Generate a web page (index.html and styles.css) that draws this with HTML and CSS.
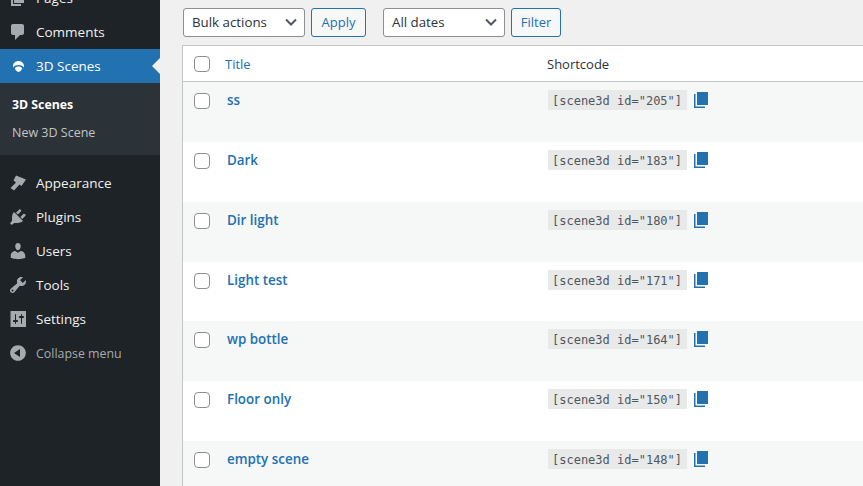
FILE: index.html
```html
<!DOCTYPE html>
<html lang="en">
<head>
    <meta charset="UTF-8">
    <meta name="viewport" content="width=device-width, initial-scale=1.0">
    <title>3D Scenes</title>
    <link rel="stylesheet" href="styles.css">
</head>
<body>
<div class="admin">
    <nav class="sidebar">
        <ul class="menu">
            <li class="menu-item">
                <svg class="menu-icon" viewBox="0 0 20 20"><path d="M6 15V2h10v13H6zm-1 1h8v2H3V5h2v11z"/></svg>
                <span>Pages</span>
            </li>
            <li class="menu-item">
                <svg class="menu-icon" viewBox="0 0 20 20"><path d="M5 2h9c1.100 0 2 .9 2 2v7c0 1.100-.9 2-2 2h-2l-5 5v-5H5c-1.100 0-2-.9-2-2V4c0-1.100.9-2 2-2z"/></svg>
                <span>Comments</span>
            </li>
            <li class="menu-item current">
                <svg class="menu-icon" viewBox="0 0 20 20"><path d="M10.500 5c3 0 5.500 2.200 5.500 5 0 .5-.1 1-.2 1.400C14.500 9.800 12.600 9 10.500 9s-4 .8-5.300 2.400C5.100 11 5 10.500 5 10c0-2.800 2.500-5 5.500-5zm0 5.500c1.500 0 2.800.6 3.800 1.600-.7 2.300-2.100 3.900-3.800 3.900s-3.100-1.600-3.800-3.900c1-1 2.300-1.600 3.800-1.600z"/></svg>
                <span>3D Scenes</span>
            </li>
            <li class="submenu">
                <a class="sub-link active">3D Scenes</a>
                <a class="sub-link">New 3D Scene</a>
            </li>
            <li class="menu-item">
                <svg class="menu-icon" viewBox="0 0 20 20"><path d="M8 2.500l10 4-4.500 6.500-2-1.500-5.500 6-3.500-2.500 5.500-5.500-2.500-2z"/></svg>
                <span>Appearance</span>
            </li>
            <li class="menu-item">
                <svg class="menu-icon" viewBox="0 0 20 20"><path d="M13.110 4.360L9.870 7.600 8 5.730l3.240-3.240c.35-.34 1.050-.2 1.560.32.520.51.660 1.210.310 1.550zm-8 1.770l.91-1.120 9.010 9.010-1.190.84c-.710.710-2.630 1.160-3.820 1.160H6.140L4.900 17.260c-.590.590-1.540.590-2.120 0-.590-.580-.590-1.530 0-2.120l1.240-1.240v-3.880c0-1.130.4-3.050 1.090-3.890zm7.260 3.970l3.240-3.240c.34-.35 1.040-.21 1.550.31.520.51.660 1.210.31 1.550l-3.240 3.250z"/></svg>
                <span>Plugins</span>
            </li>
            <li class="menu-item">
                <svg class="menu-icon" viewBox="0 0 20 20"><path d="M10 9.250c-2.270 0-2.730-3.440-2.730-3.440C7 4.020 7.820 2 9.970 2c2.160 0 2.980 2.020 2.710 3.810 0 0-.41 3.440-2.680 3.440zm0 2.570L12.720 10c2.390 0 4.520 2.330 4.520 4.530v2.490s-3.650 1.130-7.240 1.130c-3.650 0-7.240-1.130-7.240-1.130v-2.490c0-2.250 1.940-4.480 4.470-4.480z"/></svg>
                <span>Users</span>
            </li>
            <li class="menu-item">
                <svg class="menu-icon" viewBox="0 0 20 20"><path d="M16.680 9.770c-1.340 1.340-3.300 1.670-4.950.99l-5.410 6.520c-.99.990-2.590.990-3.580 0s-.990-2.590 0-3.570l6.520-5.420c-.68-1.650-.35-3.610.99-4.950 1.280-1.280 3.120-1.620 4.720-1.060l-2.890 2.890 2.820 2.820 2.860-2.870c.53 1.580.18 3.420-1.080 4.670zM3.810 16.210c.4.390 1.040.39 1.430 0 .4-.4.400-1.040 0-1.430-.39-.4-1.030-.4-1.430 0-.39.390-.39 1.030 0 1.430z"/></svg>
                <span>Tools</span>
            </li>
            <li class="menu-item">
                <svg class="menu-icon" viewBox="0 0 20 20"><path fill-rule="evenodd" d="M18 18V2H2.500v16H18zM8 11h1c.55 0 1 .45 1 1s-.45 1-1 1H8v1.500c0 .280-.22.500-.5.500s-.5-.22-.5-.5V13H6c-.55 0-1-.45-1-1s.45-1 1-1h1V5.500c0-.280.22-.5.5-.5s.5.220.5.500V11zm5-2h-1c-.55 0-1-.45-1-1s.45-1 1-1h1V5.500c0-.280.22-.5.5-.5s.5.220.5.500V7h1c.55 0 1 .45 1 1s-.45 1-1 1h-1v5.500c0 .280-.22.500-.5.500s-.5-.22-.5-.5V9z"/></svg>
                <span>Settings</span>
            </li>
            <li class="menu-item collapse">
                <svg class="menu-icon" viewBox="0 0 20 20"><path fill-rule="evenodd" d="M10 2.160c4.330 0 7.840 3.510 7.840 7.840S14.330 17.840 10 17.840 2.160 14.330 2.160 10 5.670 2.160 10 2.160zM12 14V6l-6 4z"/></svg>
                <span>Collapse menu</span>
            </li>
        </ul>
    </nav>

    <main class="content">
        <div class="toolbar">
            <div class="select">Bulk actions<svg class="caret" viewBox="0 0 16 16"><path d="M3 5.500l5 5 5-5"/></svg></div>
            <button class="btn btn-apply">Apply</button>
            <div class="select dates">All dates<svg class="caret" viewBox="0 0 16 16"><path d="M3 5.500l5 5 5-5"/></svg></div>
            <button class="btn btn-filter">Filter</button>
        </div>

        <div class="table">
            <div class="row head">
                <span class="check"></span>
                <a class="col-title">Title</a>
                <span class="col-code">Shortcode</span>
            </div>
            <div class="row odd">
                <span class="check"></span>
                <a class="title">ss</a>
                <div class="code-cell"><code>[scene3d id="205"]</code><svg class="copy" viewBox="0 0 14 16"><path d="M0 2h1.500v12.500H11V16H0z"/><path d="M3 0h11v13H3z"/></svg></div>
            </div>
            <div class="row">
                <span class="check"></span>
                <a class="title">Dark</a>
                <div class="code-cell"><code>[scene3d id="183"]</code><svg class="copy" viewBox="0 0 14 16"><path d="M0 2h1.500v12.500H11V16H0z"/><path d="M3 0h11v13H3z"/></svg></div>
            </div>
            <div class="row odd">
                <span class="check"></span>
                <a class="title">Dir light</a>
                <div class="code-cell"><code>[scene3d id="180"]</code><svg class="copy" viewBox="0 0 14 16"><path d="M0 2h1.500v12.500H11V16H0z"/><path d="M3 0h11v13H3z"/></svg></div>
            </div>
            <div class="row">
                <span class="check"></span>
                <a class="title">Light test</a>
                <div class="code-cell"><code>[scene3d id="171"]</code><svg class="copy" viewBox="0 0 14 16"><path d="M0 2h1.500v12.500H11V16H0z"/><path d="M3 0h11v13H3z"/></svg></div>
            </div>
            <div class="row odd">
                <span class="check"></span>
                <a class="title">wp bottle</a>
                <div class="code-cell"><code>[scene3d id="164"]</code><svg class="copy" viewBox="0 0 14 16"><path d="M0 2h1.500v12.500H11V16H0z"/><path d="M3 0h11v13H3z"/></svg></div>
            </div>
            <div class="row">
                <span class="check"></span>
                <a class="title">Floor only</a>
                <div class="code-cell"><code>[scene3d id="150"]</code><svg class="copy" viewBox="0 0 14 16"><path d="M0 2h1.500v12.500H11V16H0z"/><path d="M3 0h11v13H3z"/></svg></div>
            </div>
            <div class="row odd">
                <span class="check"></span>
                <a class="title">empty scene</a>
                <div class="code-cell"><code>[scene3d id="148"]</code><svg class="copy" viewBox="0 0 14 16"><path d="M0 2h1.500v12.500H11V16H0z"/><path d="M3 0h11v13H3z"/></svg></div>
            </div>
        </div>
    </main>
</div>
</body>
</html>
```

FILE: styles.css
```css
html, body {
    margin: 0;
    height: 486px;
    overflow: hidden;
}
body {
    font-family: "Open Sans", "Noto Sans", sans-serif;
    font-size: 13px;
    color: #3c434a;
    background: #f0f0f1;
}
.admin {
    display: flex;
    height: 486px;
    overflow: hidden;
}

/* sidebar */
.sidebar {
    width: 160px;
    flex: none;
    background: #1d2327;
    overflow: hidden;
}
.menu {
    list-style: none;
    margin: -19px 0 0;
    padding: 0;
}
.menu-item {
    display: flex;
    align-items: center;
    position: relative;
    height: 34px;
    padding-left: 8px;
    color: #f0f0f1;
    font-size: 13.5px;
}
.menu-icon {
    width: 20px;
    height: 20px;
    margin-right: 8px;
    fill: #a7aaad;
    flex: none;
}
.current {
    background: #2271b1;
    color: #fff;
}
.current .menu-icon {
    fill: #fff;
}
.current::after {
    content: "";
    position: absolute;
    right: 0;
    top: 9px;
    border: 8px solid transparent;
    border-right-color: #f0f0f1;
    border-left-width: 0;
}
.submenu {
    display: flex;
    flex-direction: column;
    gap: 6px;
    height: 72px;
    box-sizing: border-box;
    padding: 11px 12px 0;
    background: #2c3338;
    color: #c3c4c7;
    font-size: 12.5px;
}
.sub-link {
    line-height: 22px;
}
.sub-link.active {
    color: #fff;
    font-size: 12.3px;
    font-weight: 700;
}
.submenu + .menu-item {
    margin-top: 11px;
}
.collapse {
    color: #a7aaad;
    font-size: 12.4px;
}

/* list table */
.content {
    flex: 1;
    min-width: 0;
    padding-left: 22px;
}
.toolbar {
    display: flex;
    align-items: center;
    height: 29px;
    margin: 8px 0 8px 1px;
}
.select {
    display: flex;
    align-items: center;
    justify-content: space-between;
    box-sizing: border-box;
    width: 122px;
    height: 29px;
    padding: 0 5px 1px 8px;
    font-size: 13.3px;
    color: #2c3338;
    background: #fff;
    border: 1px solid #8c8f94;
    border-radius: 3px;
}
.dates {
    margin-left: 17px;
}
.caret {
    width: 16px;
    height: 16px;
    fill: none;
    stroke: #50575e;
    stroke-width: 2;
}
.btn {
    height: 29px;
    margin-left: 6px;
    padding: 0 0 1px;
    font: 13px "Open Sans", "Noto Sans", sans-serif;
    color: #2271b1;
    background: #f6f7f7;
    border: 1px solid #2271b1;
    border-radius: 3px;
}
.btn-apply {
    width: 55px;
}
.btn-filter {
    width: 50px;
}
.table {
    background: #fff;
    border: 1px solid #c3c4c7;
    border-right: none;
    border-bottom: none;
}
.row {
    display: grid;
    grid-template-columns: 44px 320px 1fr;
    height: 59.85px;
    box-sizing: border-box;
    padding-top: 8px;
}
.row.odd {
    background: #f6f7f7;
}
.row.head {
    height: 36px;
    padding-top: 0;
    align-items: center;
    border-bottom: 1px solid #c3c4c7;
}
.check {
    box-sizing: border-box;
    width: 16px;
    height: 16px;
    margin: 3px 0 0 11px;
    background: #fff;
    border: 1px solid #8c8f94;
    border-radius: 4px;
}
.head .check {
    margin-top: 1px;
}
.col-title {
    margin-left: -2px;
    color: #2271b1;
}
.col-code {
    color: #2c3338;
}
.title {
    font-size: 13.4px;
    font-weight: 600;
    color: #2271b1;
    line-height: 21px;
}
.code-cell {
    display: flex;
    align-items: flex-start;
    gap: 7px;
    margin: 0 0 0 1px;
}
code {
    display: block;
    height: 20px;
    padding: 0 5px 0 4px;
    font-family: "DejaVu Sans Mono", monospace;
    font-size: 12px;
    line-height: 22px;
    color: #50575e;
    background: #e8e9e9;
}
.copy {
    width: 14px;
    height: 16px;
    margin-top: 2px;
    fill: #2271b1;
}
```
